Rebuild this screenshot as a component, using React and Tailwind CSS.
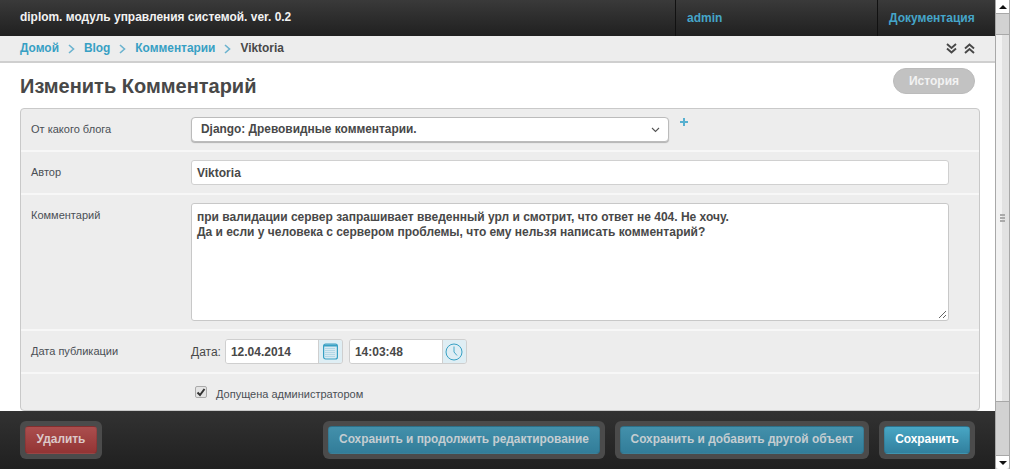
import React from "react";

const Chev = () => (
  <svg width="7" height="10" viewBox="0 0 7 10" className="mx-[9px]" fill="none" stroke="#6cb3cf" strokeWidth="1.6"><path d="M1 1l4.5 4L1 9" /></svg>
);

const FooterBtn = ({ children, outer, inner, text = "text-[#c4cdd1]" }) => (
  <div className={`rounded-[6px] bg-[#4b4b4b] p-[5px] ${outer}`}>
    <div className={`h-[28px] rounded-[4px] border border-black/10 flex items-center justify-center text-[11.9px] font-bold ${inner} ${text}`}>{children}</div>
  </div>
);

const blue = "bg-gradient-to-b from-[#48a6c4] to-[#31809e]";
const dimBlue = "bg-gradient-to-b from-[#4390ab] to-[#327d99]";

const Arrow = ({ d }) => (
  <svg width="10" height="10" viewBox="0 0 10 10" fill="#111"><path d={d} /></svg>
);

const Row = ({ label, children, className = "", labelClass = "" }) => (
  <div className={`flex border-b-2 border-[#f7f7f7] shrink-0 ${className}`}>
    <div className={`w-[170px] pl-[10px] text-[11px] leading-[13px] text-[#4a4f55] shrink-0 ${labelClass}`}>{label}</div>
    {children}
  </div>
);

export default function App() {
  return (
    <div className="w-[1010px] h-[469px] overflow-hidden flex bg-white font-['Liberation_Sans',Arial,sans-serif] text-[#484848]">
      <div className="w-[995px] h-full flex flex-col shrink-0">
        <header className="h-[36px] shrink-0 flex bg-gradient-to-b from-[#3a3a3a] to-[#202020]">
          <div className="flex-1 pl-[20px] flex items-center text-[11.95px] font-bold text-[#f2f2f2]">diplom. модуль управления системой. ver. 0.2</div>
          <div className="w-[202px] border-l border-[#111] pl-[11px] flex items-center text-[12px] font-bold text-[#45a5c9]">admin</div>
          <div className="w-[118px] border-l border-[#111] pl-[11px] flex items-center text-[12px] font-bold text-[#45a5c9]">Документация</div>
        </header>

        <nav className="h-[27px] shrink-0 bg-[#ededed] border-b-2 border-[#cfcfcf] flex items-center pl-[20px] pr-[20px] text-[11.9px] font-bold">
          <span className="text-[#37a0c4]">Домой</span>
          <Chev />
          <span className="text-[#37a0c4]">Blog</span>
          <Chev />
          <span className="text-[#37a0c4]">Комментарии</span>
          <Chev />
          <span>Viktoria</span>
          <div className="ml-auto flex items-center gap-[7px]">
            <svg width="11" height="11" viewBox="0 0 11 11" fill="none" stroke="#484848" strokeWidth="1.9"><path d="M1 1l4.5 4L10 1M1 5.5l4.5 4 4.5-4" /></svg>
            <svg width="11" height="11" viewBox="0 0 11 11" fill="none" stroke="#484848" strokeWidth="1.9"><path d="M1 5.5l4.5-4 4.5 4M1 10l4.5-4 4.5 4" /></svg>
          </div>
        </nav>

        <div className="h-[45px] shrink-0 flex pl-[20px] pr-[20px] relative">
          <h1 className="text-[20px] font-bold leading-[23px] mt-[12px]">Изменить Комментарий</h1>
          <div className="ml-auto mt-[5px] w-[82px] h-[26px] rounded-full bg-[#c2c2c2] border border-[#bbb] flex items-center justify-center text-[12px] font-bold text-[#f2f2f2]">История</div>
        </div>

        <div className="ml-[20px] mr-[15px] h-[303px] shrink-0 rounded-[4px] border border-[#c9c9c9] bg-[#ededed] flex flex-col overflow-hidden">
          <Row label="От какого блога" className="h-[43px]" labelClass="pt-[14px]">
            <div className="mt-[8px] w-[478px] h-[25px] rounded-[4px] bg-white border border-[#bbb] shadow-[0_1px_1px_rgba(0,0,0,0.25)] flex items-center pl-[9px] pr-[8px] text-[11.9px] font-bold">
              Django: Древовидные комментарии.
              <svg className="ml-auto" width="9" height="6" viewBox="0 0 9 6" fill="none" stroke="#555" strokeWidth="1.1"><path d="M1 1l3.5 3.5L8 1" /></svg>
            </div>
            <svg className="ml-[11px] mt-[9px]" width="8" height="8" viewBox="0 0 8 8" fill="#57b0d0"><path d="M3 0h2v3h3v2H5v3H3V5H0V3h3z" /></svg>
          </Row>
          <Row label="Автор" className="h-[43px]" labelClass="pt-[14px]">
            <div className="mt-[8px] w-[758px] h-[25px] rounded-[3px] bg-white border border-[#d0d0d0] flex items-center pl-[5px] text-[12px] font-bold">Viktoria</div>
          </Row>
          <Row label="Комментарий" className="h-[136px]" labelClass="pt-[14px]">
            <div className="relative mt-[8px] w-[758px] h-[118px] rounded-[3px] bg-white border border-[#c8c8c8] pl-[5px] pt-[6px] text-[12px] font-bold leading-[15px]">
              <div>при валидации сервер запрашивает введенный урл и смотрит, что ответ не 404. Не хочу.</div>
              <div>Да и если у человека с сервером проблемы, что ему нельзя написать комментарий?</div>
              <svg className="absolute right-[1px] bottom-[1px]" width="9" height="9" viewBox="0 0 9 9" stroke="#666" strokeWidth="1"><path d="M1 8l7-7M5 8l3-3" /></svg>
            </div>
          </Row>
          <Row label="Дата публикации" className="h-[43px]" labelClass="pt-[14px]">
            <div className="flex items-center h-[25px] mt-[8px]">
              <span className="text-[12px] mr-[4px]">Дата:</span>
              <div className="flex h-[25px] w-[118px] rounded-[3px] border border-[#cfcfcf] overflow-hidden">
                <div className="w-[92px] bg-white flex items-center pl-[5px] text-[12px] font-bold">12.04.2014</div>
                <div className="flex-1 bg-[#dfeef4] border-l border-[#cfcfcf] flex items-center justify-center">
                  <svg width="15" height="17" viewBox="0 0 15 17" fill="none">
                    <rect x="0.6" y="1" width="13.8" height="15" rx="2" fill="#d8eaf2" stroke="#37a0c4" strokeWidth="1.2" />
                    <path d="M1 1.5h13V3.5H1z" fill="#37a0c4" />
                    <path d="M2.5 5.5h10M2.5 7.5h10M2.5 9.5h10M2.5 11.5h10M2.5 13.5h10" stroke="#8cc5da" strokeDasharray="1 1" />
                  </svg>
                </div>
              </div>
              <div className="ml-[6px] flex h-[25px] w-[118px] rounded-[3px] border border-[#cfcfcf] overflow-hidden">
                <div className="w-[92px] bg-white flex items-center pl-[5px] text-[12px] font-bold">14:03:48</div>
                <div className="flex-1 bg-[#dfeef4] border-l border-[#cfcfcf] flex items-center justify-center">
                  <svg width="18" height="18" viewBox="0 0 18 18" fill="none" stroke="#37a0c4">
                    <circle cx="9" cy="9" r="8" strokeWidth="1" />
                    <path d="M9 3.5V9l3 3.5" strokeWidth="0.9" />
                  </svg>
                </div>
              </div>
            </div>
          </Row>
          <div className="flex-1 flex pl-[174px] pt-[12px]">
            <div className="w-[12px] h-[12px] rounded-[2px] bg-[#e4e4e4] border border-[#aaa] flex items-center justify-center">
              <svg width="10" height="9" viewBox="0 0 10 9" fill="none" stroke="#333" strokeWidth="2"><path d="M1.5 4.5L4 7l4.5-6" /></svg>
            </div>
            <span className="ml-[9px] mt-[1px] text-[11px] leading-[15px] text-[#4a4f55]">Допущена администратором</span>
          </div>
        </div>

        <footer className="flex-1 bg-gradient-to-b from-[#323232] to-[#202020] flex items-start pt-[10px] pl-[20px] pr-[20px]">
          <FooterBtn outer="w-[82px]" inner="bg-gradient-to-b from-[#ab4e4e] to-[#933434]" text="text-[#dcc8c8]">Удалить</FooterBtn>
          <FooterBtn outer="ml-auto w-[282px]" inner={dimBlue}>Сохранить и продолжить редактирование</FooterBtn>
          <FooterBtn outer="ml-[10px] w-[254px]" inner={dimBlue}>Сохранить и добавить другой объект</FooterBtn>
          <FooterBtn outer="ml-[10px] w-[96px]" inner={blue} text="text-white">Сохранить</FooterBtn>
        </footer>
      </div>

      <div className="w-[15px] h-full flex flex-col bg-[#d2d2d2] border-x border-[#a8a8a8]">
        <div className="h-[14px] shrink-0 bg-white border-b border-[#a8a8a8] flex items-center justify-center">
          <Arrow d="M1 7h8L5 3z" />
        </div>
        <div className="h-[20px] shrink-0 bg-[#d2d2d2]" />
        <div className="h-[368px] shrink-0 border-y border-[#a8a8a8] bg-gradient-to-r from-[#f2f2f2] from-50% to-[#e2e2e2] to-50% flex flex-col items-center justify-center gap-[1px]">
          <div className="w-[5px] h-[2px] bg-[#aaa]" />
          <div className="w-[5px] h-[2px] bg-[#aaa]" />
          <div className="w-[5px] h-[2px] bg-[#aaa]" />
        </div>
        <div className="flex-1 bg-[#d2d2d2]" />
        <div className="h-[14px] shrink-0 bg-white border-t border-[#a8a8a8] rounded-b-[3px] flex items-center justify-center">
          <Arrow d="M1 3h8L5 7z" />
        </div>
      </div>
    </div>
  );
}
